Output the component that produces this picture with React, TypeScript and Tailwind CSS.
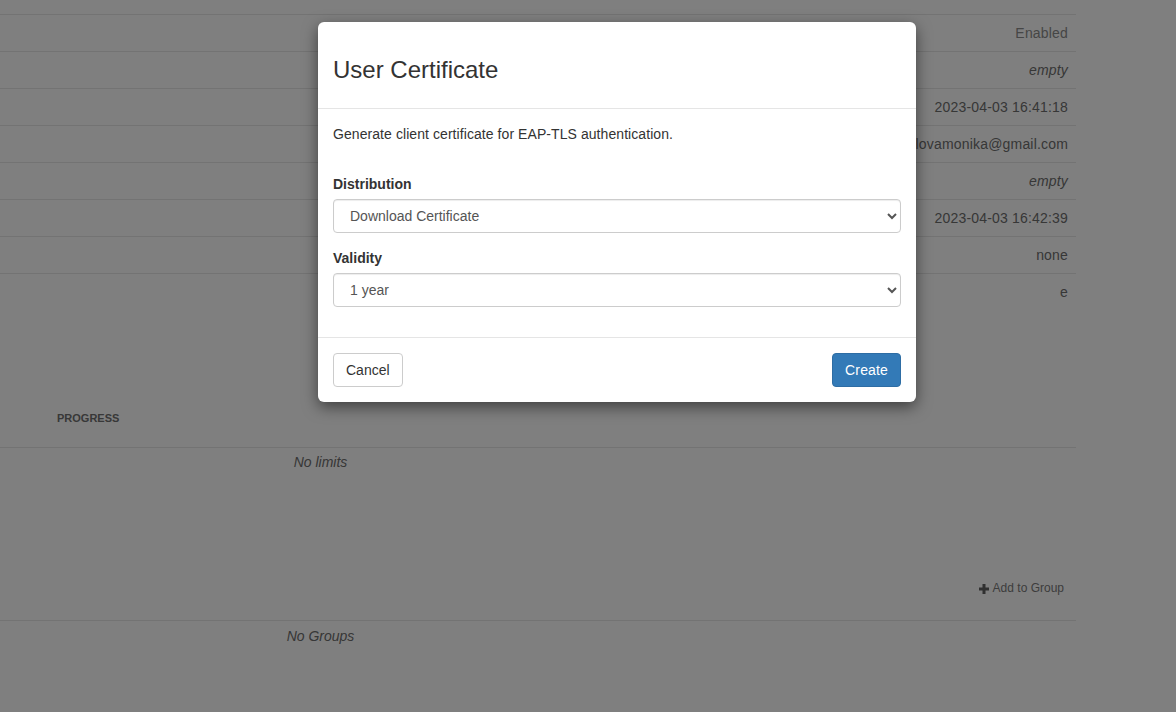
import React from "react";

const rows: { v: string; italic?: boolean; cls?: string }[] = [
  { v: "Enabled", cls: "text-[#8c8c8c]" },
  { v: "empty", italic: true },
  { v: "2023-04-03 16:41:18" },
  { v: "kozlovamonika@gmail.com" },
  { v: "empty", italic: true },
  { v: "2023-04-03 16:42:39" },
  { v: "none" },
  { v: "e" },
];

export default function App() {
  return (
    <div
      className="relative h-[712px] w-full overflow-hidden bg-white text-[14px] text-[#6e6e6e]"
      style={{ fontFamily: '"Liberation Sans", Arial, sans-serif' }}
    >
      {/* Background page */}
      <div className="w-[1076px] pt-[14px]">
        {rows.map((r, i) => (
          <div
            key={i}
            className={`flex h-[37px] items-center justify-end border-t border-[#e6e6e6] pr-2 leading-[20px] tracking-[0.18px] ${
              r.italic ? "italic" : ""
            } ${r.cls ?? ""}`}
          >
            {r.v}
          </div>
        ))}
        <div className="border-b border-[#e6e6e6] pt-[100px] pb-[21px]">
          <div className="pl-[57px] text-[11px] font-bold uppercase leading-[16px] text-[#707070]">
            Progress
          </div>
        </div>
        <div className="mt-[4px] flex h-[20px] w-[641px] justify-center italic leading-[20px]">
          No limits
        </div>
        <div className="flex h-[148px] items-end justify-end pb-[23px] pr-[12px]">
          <div className="flex items-center gap-[4px] text-[12px] leading-[17px] text-[#7a7a7a]">
            <svg width="10" height="10" viewBox="0 0 10 10" className="text-[#606060]">
              <rect x="3.5" y="0" width="3" height="10" fill="currentColor" />
              <rect x="0" y="3.5" width="10" height="3" fill="currentColor" />
            </svg>
            <span>Add to Group</span>
          </div>
        </div>
        <div className="border-t border-[#e6e6e6] pt-[5px]">
          <div className="flex h-[20px] w-[641px] justify-center italic leading-[20px]">No Groups</div>
        </div>
      </div>

      {/* Backdrop */}
      <div className="absolute inset-0 bg-black/50" />

      {/* Modal */}
      <div className="absolute left-[318px] top-[22px] w-[598px] rounded-[6px] bg-white text-[#333] shadow-[0_5px_15px_rgba(0,0,0,0.5)]">
        <div className="border-b border-[#e5e5e5] p-[15px]">
          <h4 className="mb-[10px] mt-[20px] text-[24px] font-normal leading-[1.1] text-[#333]">
            User Certificate
          </h4>
        </div>
        <div className="p-[15px]">
          <p className="mb-[30px] leading-[20px] tracking-[0.07px]">
            Generate client certificate for EAP-TLS authentication.
          </p>
          <div className="mb-[15px]">
            <label className="mb-[5px] block font-bold leading-[20px]">Distribution</label>
            <select
              defaultValue="download"
              className="block h-[34px] w-full rounded-[4px] border border-[#ccc] bg-white px-3 py-[6px] text-[14px] text-[#555] shadow-[inset_0_1px_1px_rgba(0,0,0,0.075)]"
            >
              <option value="download">Download Certificate</option>
              <option value="email">Send by Email</option>
            </select>
          </div>
          <div className="mb-[15px]">
            <label className="mb-[5px] block font-bold leading-[20px]">Validity</label>
            <select
              defaultValue="1"
              className="block h-[34px] w-full rounded-[4px] border border-[#ccc] bg-white px-3 py-[6px] text-[14px] text-[#555] shadow-[inset_0_1px_1px_rgba(0,0,0,0.075)]"
            >
              <option value="1">1 year</option>
              <option value="2">2 years</option>
              <option value="5">5 years</option>
            </select>
          </div>
        </div>
        <div className="flex items-center justify-between border-t border-[#e5e5e5] p-[15px]">
          <button className="h-[34px] rounded-[4px] border border-[#ccc] bg-white px-3 leading-[20px] text-[#333]">
            Cancel
          </button>
          <button className="h-[34px] rounded-[4px] border border-[#2e6da4] bg-[#337ab7] px-3 leading-[20px] tracking-[0.15px] text-white">
            Create
          </button>
        </div>
      </div>
    </div>
  );
}
